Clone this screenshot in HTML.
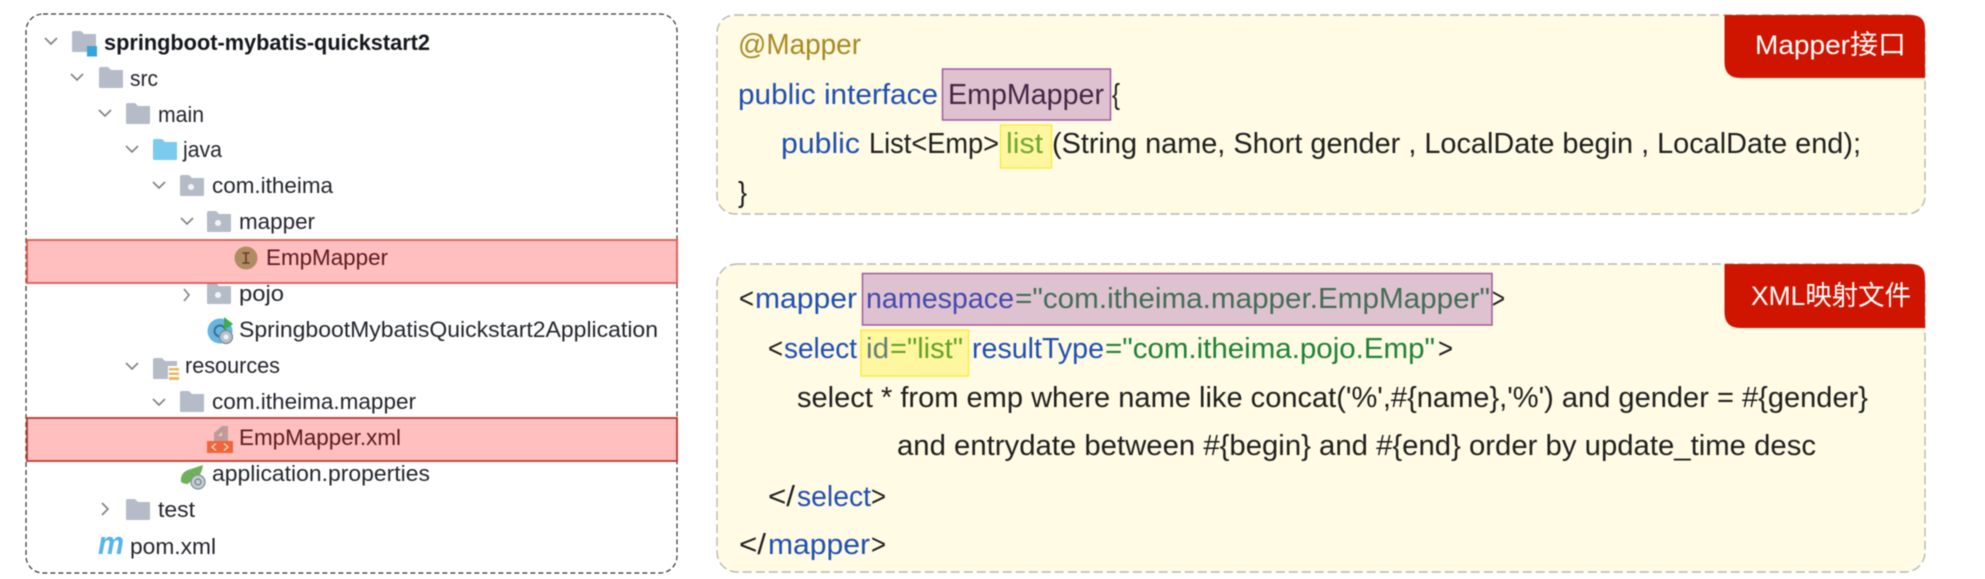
<!DOCTYPE html>
<html lang="zh">
<head>
<meta charset="utf-8">
<title>Mapper XML</title>
<style>
html,body{margin:0;padding:0;background:#fff;width:1985px;height:579px;overflow:hidden}
svg{display:block;filter:blur(.45px)}
text{font-family:"Liberation Sans","Noto Sans CJK SC",sans-serif;white-space:pre}
.t{font-size:22.5px;fill:#24262c}
.c{font-size:28.5px;fill:#1e1e1e}
.k{fill:#1f4fb0}
.g{fill:#1f8236}
.l{font-size:27px;fill:#fff}
.ch{fill:none;stroke:#7d8186;stroke-width:1.6}
.f{fill:#b5bcc7}
</style>
</head>
<body>
<svg width="1985" height="579" viewBox="0 0 1985 579" xmlns="http://www.w3.org/2000/svg">
<defs>
<path id="fd" d="M0 2q0-2 2-2h7l3 3h12v17q0 1-1 1H1q-1 0-1-1z"/>
</defs>
<rect width="1985" height="579" fill="#fff"/>

<!-- left panel -->
<rect x="26" y="14" width="651" height="559" rx="17" fill="#fff" stroke="#333" stroke-width="1.200" stroke-dasharray="5 3"/>

<!-- chevrons -->
<path class="ch" d="M45 38l6 6 6-6M71 74l6 6 6-6M99 110l6 6 6-6M126 146l6 6 6-6M153 182l6 6 6-6M181 218l6 6 6-6M126 363l6 6 6-6M153 399l6 6 6-6"/>
<path class="ch" d="M184 289l5 6-5 6M102 503l6 6-6 6"/>

<!-- folders -->
<use href="#fd" class="f" x="72" y="31"/>
<rect x="87" y="46" width="10" height="10.5" fill="#35a4dc"/>
<use href="#fd" class="f" x="99" y="67"/>
<use href="#fd" class="f" x="126" y="103"/>
<use href="#fd" x="153" y="139" fill="#7ccaee"/>
<use href="#fd" class="f" x="180" y="175"/>
<circle cx="191" cy="187" r="3" fill="#f2f4f7"/>
<use href="#fd" class="f" x="207" y="211"/>
<circle cx="218" cy="223" r="3" fill="#f2f4f7"/>
<use href="#fd" class="f" x="207" y="283"/>
<circle cx="218" cy="295" r="3" fill="#f2f4f7"/>
<use href="#fd" class="f" x="153" y="358"/>
<path d="M168 366h11v15h-11z" fill="#fff"/>
<path d="M169 368h10v2.500h-10zM169 372.500h10v2.500h-10zM169 377h10v3h-10z" fill="#e9b764"/>
<use href="#fd" class="f" x="180" y="391"/>
<use href="#fd" class="f" x="126" y="499"/>

<!-- spring app icon -->
<circle cx="220" cy="331" r="12.500" fill="#66b5e2"/>
<circle cx="220" cy="331" r="5.500" fill="none" stroke="#3e6f8e" stroke-width="2"/>
<path d="M224 317l9 7-9 6z" fill="#3cab4b"/>
<circle cx="226" cy="337" r="6.500" fill="#b6c3ce" stroke="#7e8b97" stroke-width="1.300"/>
<circle cx="226" cy="337" r="2.500" fill="#eef2f5"/>

<!-- properties icon -->
<path d="M181 482q-1-9 7-12 9-3 15-5-1 8-5 12-7 3-10 7-4 0-7-2z" fill="#6fb05a"/>
<circle cx="198" cy="482" r="7" fill="#c6ced4" stroke="#80909b" stroke-width="1.300"/>
<circle cx="198" cy="482" r="3" fill="none" stroke="#6f7f8a" stroke-width="1.200"/>

<!-- tree text -->
<text x="104" y="50" textLength="326" lengthAdjust="spacingAndGlyphs" class="t" style="font-weight:700;fill:#15171d">springboot-mybatis-quickstart2</text>
<text x="130" y="86" textLength="28" lengthAdjust="spacingAndGlyphs" class="t">src</text>
<text x="158" y="122" textLength="46" lengthAdjust="spacingAndGlyphs" class="t">main</text>
<text x="183" y="157" textLength="39" lengthAdjust="spacingAndGlyphs" class="t">java</text>
<text x="212" y="193" textLength="121" lengthAdjust="spacingAndGlyphs" class="t">com.itheima</text>
<text x="239" y="229" textLength="76" lengthAdjust="spacingAndGlyphs" class="t">mapper</text>
<text x="266" y="265" textLength="122" lengthAdjust="spacingAndGlyphs" class="t">EmpMapper</text>
<text x="239" y="301" textLength="45" lengthAdjust="spacingAndGlyphs" class="t">pojo</text>
<text x="239" y="337" textLength="419" lengthAdjust="spacingAndGlyphs" class="t">SpringbootMybatisQuickstart2Application</text>
<text x="185" y="373" textLength="95" lengthAdjust="spacingAndGlyphs" class="t">resources</text>
<text x="212" y="409" textLength="204" lengthAdjust="spacingAndGlyphs" class="t">com.itheima.mapper</text>
<text x="239" y="445" textLength="162" lengthAdjust="spacingAndGlyphs" class="t">EmpMapper.xml</text>
<text x="212" y="481" textLength="218" lengthAdjust="spacingAndGlyphs" class="t">application.properties</text>
<text x="158" y="517" textLength="37" lengthAdjust="spacingAndGlyphs" class="t">test</text>
<text x="98" y="554" textLength="26" lengthAdjust="spacingAndGlyphs" style="font-size:32px;font-weight:700;font-style:italic;fill:#58b4e8">m</text>
<text x="130" y="554" textLength="86" lengthAdjust="spacingAndGlyphs" class="t">pom.xml</text>

<!-- highlighted rows -->
<rect x="27" y="240" width="650" height="43" fill="#ff0000" fill-opacity=".25" stroke="#dd5a50" stroke-width="1.800"/>
<rect x="27" y="418" width="650" height="43" fill="#ff0000" fill-opacity=".25" stroke="#b93a32" stroke-width="1.800"/>

<!-- interface icon -->
<circle cx="246" cy="258" r="11.500" fill="#b08c62"/>
<path d="M242.500 253h7M242.500 263h7M246 253v10" stroke="#6b3c2a" stroke-width="1.600" fill="none"/>

<!-- xml icon -->
<path d="M214 433l8-7h6v15h-14z" fill="#c09a98"/>
<path d="M218 436l4-4v4z" fill="#f5c8c4"/>
<rect x="207" y="441" width="26" height="12" fill="#f0653a"/>
<path d="M216 443.500l-4 3.500 4 3.500M224 443.500l4 3.500-4 3.500" stroke="#ffd9c8" stroke-width="1.300" fill="none"/>

<!-- top code panel -->
<rect x="717" y="15" width="1208" height="199" rx="18" fill="#fffbe4" stroke="#b8b8b4" stroke-width="1.400" stroke-dasharray="9 4"/>
<text x="738" y="54" textLength="123" lengthAdjust="spacingAndGlyphs" class="c" style="fill:#a88a22">@Mapper</text>
<text x="738" y="104" textLength="200" lengthAdjust="spacingAndGlyphs" class="c k">public interface</text>
<text x="948" y="104" textLength="156" lengthAdjust="spacingAndGlyphs" class="c">EmpMapper</text>
<rect x="942.500" y="69" width="168" height="51" fill="#963fa3" fill-opacity=".3" stroke="#a050a0" stroke-width="1.400"/>
<text x="1112" y="104" textLength="8" lengthAdjust="spacingAndGlyphs" class="c">{</text>
<text x="781" y="153" textLength="79" lengthAdjust="spacingAndGlyphs" class="c k">public</text>
<text x="869" y="153" textLength="130" lengthAdjust="spacingAndGlyphs" class="c">List&lt;Emp&gt;</text>
<text x="1006" y="153" textLength="37" lengthAdjust="spacingAndGlyphs" class="c" style="fill:#2f8a4a">list</text>
<rect x="1000.500" y="125" width="51" height="43" fill="#fff000" fill-opacity=".3" stroke="#f8ea40" stroke-width="1.400"/>
<text x="1052" y="153" textLength="809" lengthAdjust="spacingAndGlyphs" class="c">(String name, Short gender , LocalDate begin , LocalDate end);</text>
<text x="738" y="202" textLength="9" lengthAdjust="spacingAndGlyphs" class="c">}</text>
<path d="M1724.500 15h186.500q14 0 14 14v49h-184.500q-16 0-16-16z" fill="#cf1500"/>
<text x="1755" y="54" textLength="151" lengthAdjust="spacingAndGlyphs" class="l">Mapper接口</text>

<!-- bottom code panel -->
<rect x="717" y="264" width="1208" height="308" rx="20" fill="#fffbe4" stroke="#b8b8b4" stroke-width="1.400" stroke-dasharray="9 4"/>
<text x="739" y="308" textLength="15" lengthAdjust="spacingAndGlyphs" class="c">&lt;</text>
<text x="755" y="308" textLength="102" lengthAdjust="spacingAndGlyphs" class="c k">mapper</text>
<text x="866" y="308" textLength="148" lengthAdjust="spacingAndGlyphs" class="c k">namespace</text>
<text x="1015" y="308" textLength="475" lengthAdjust="spacingAndGlyphs" class="c g">="com.itheima.mapper.EmpMapper"</text>
<rect x="862.500" y="273.500" width="629.500" height="51.500" fill="#963fa3" fill-opacity=".3" stroke="#a050a0" stroke-width="1.400"/>
<text x="1492" y="308" textLength="13" lengthAdjust="spacingAndGlyphs" class="c">&gt;</text>

<text x="768" y="358" textLength="15" lengthAdjust="spacingAndGlyphs" class="c">&lt;</text>
<text x="784" y="358" textLength="73" lengthAdjust="spacingAndGlyphs" class="c k">select</text>
<text x="866" y="358" textLength="23" lengthAdjust="spacingAndGlyphs" class="c k">id</text>
<text x="890" y="358" textLength="73" lengthAdjust="spacingAndGlyphs" class="c g">="list"</text>
<rect x="861" y="330" width="107.500" height="46" fill="#fff000" fill-opacity=".3" stroke="#f8ea40" stroke-width="1.400"/>
<text x="972" y="358" textLength="132" lengthAdjust="spacingAndGlyphs" class="c k">resultType</text>
<text x="1105" y="358" textLength="330" lengthAdjust="spacingAndGlyphs" class="c g">="com.itheima.pojo.Emp"</text>
<text x="1438" y="358" textLength="15" lengthAdjust="spacingAndGlyphs" class="c">&gt;</text>

<text x="797" y="407" textLength="1071" lengthAdjust="spacingAndGlyphs" class="c">select * from emp where name like concat('%',#{name},'%') and gender = #{gender}</text>
<text x="897" y="455" textLength="919" lengthAdjust="spacingAndGlyphs" class="c">and entrydate between #{begin} and #{end} order by update_time desc</text>

<text x="768" y="506" textLength="27" lengthAdjust="spacingAndGlyphs" class="c">&lt;/</text>
<text x="797" y="506" textLength="74" lengthAdjust="spacingAndGlyphs" class="c k">select</text>
<text x="871" y="506" textLength="15" lengthAdjust="spacingAndGlyphs" class="c">&gt;</text>

<text x="739" y="554" textLength="27" lengthAdjust="spacingAndGlyphs" class="c">&lt;/</text>
<text x="768" y="554" textLength="102" lengthAdjust="spacingAndGlyphs" class="c k">mapper</text>
<text x="871" y="554" textLength="15" lengthAdjust="spacingAndGlyphs" class="c">&gt;</text>

<path d="M1724.500 264h186.500q14 0 14 14v50h-184.500q-16 0-16-16z" fill="#cf1500"/>
<text x="1751" y="305" textLength="160" lengthAdjust="spacingAndGlyphs" class="l">XML映射文件</text>
</svg>
</body>
</html>
